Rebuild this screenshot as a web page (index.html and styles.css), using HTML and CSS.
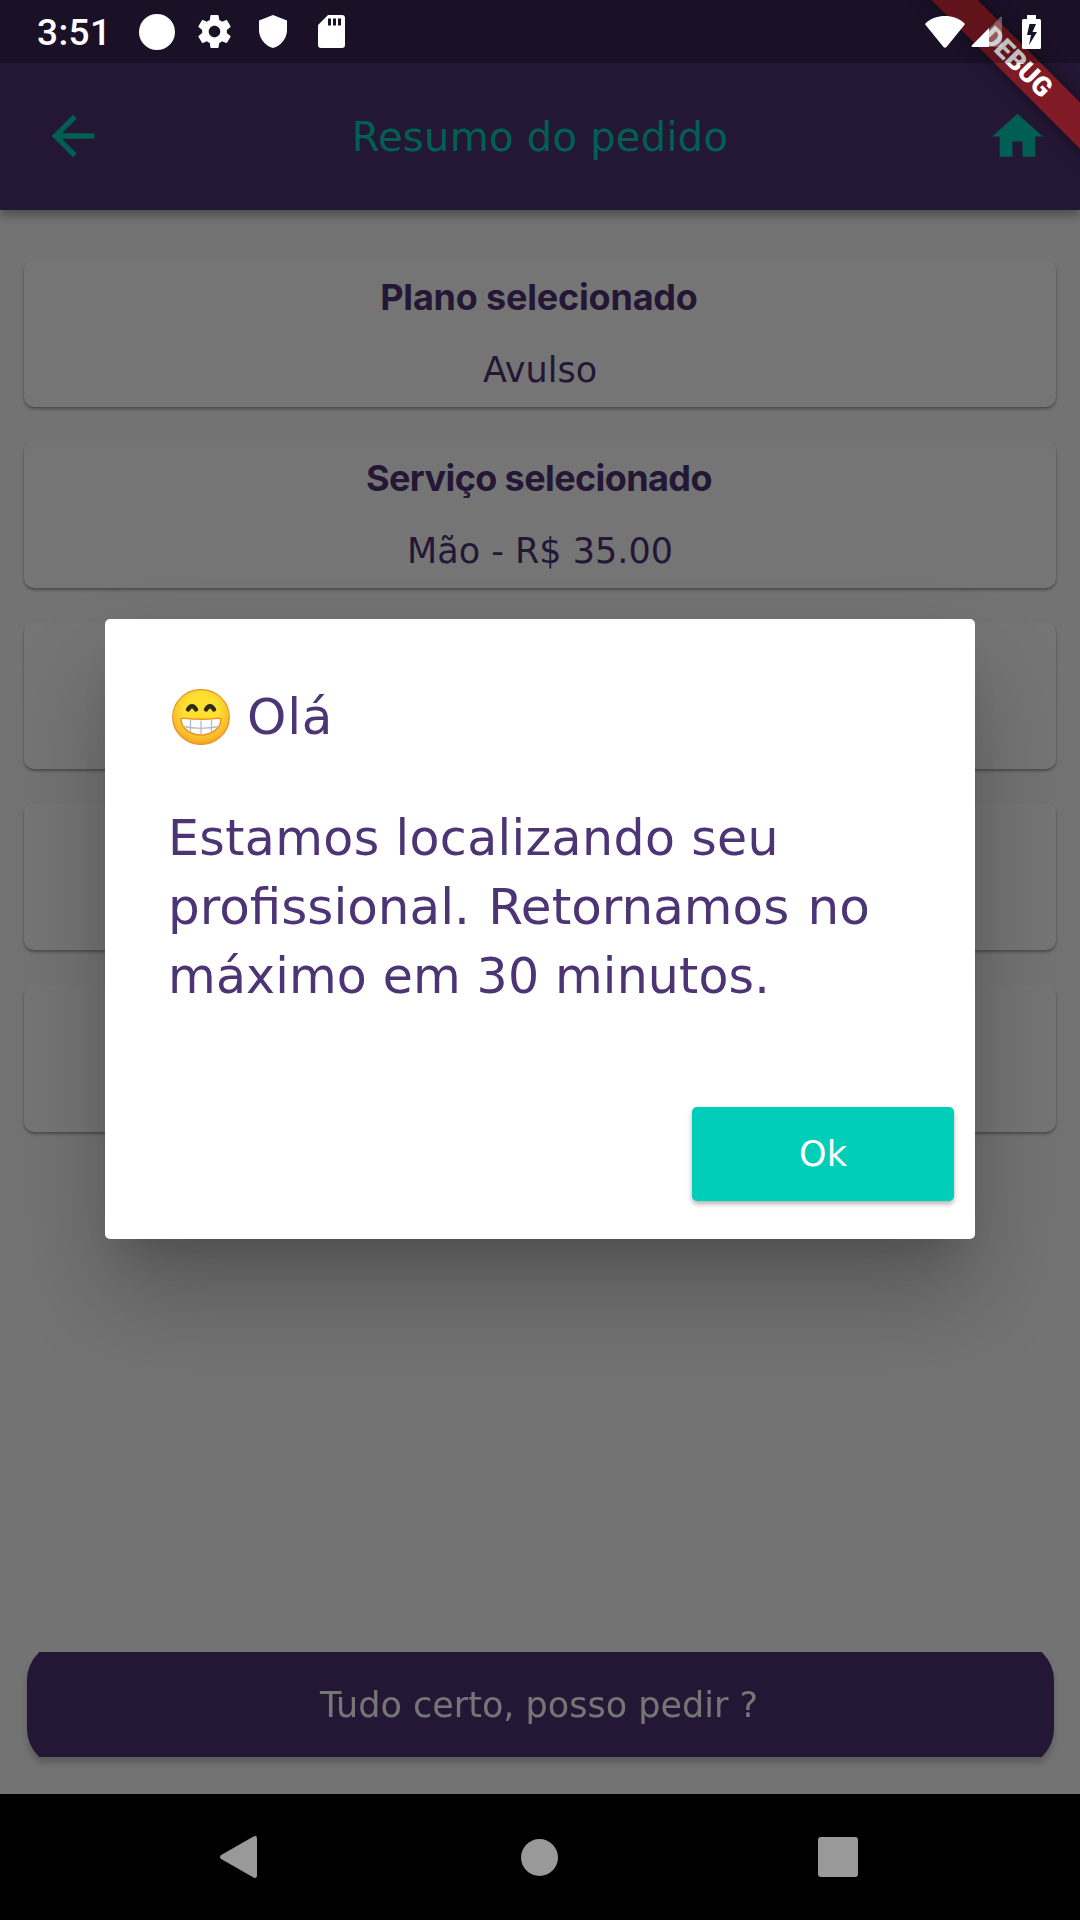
FILE: index.html
```html
<!DOCTYPE html>
<html lang="pt-BR">
<head>
    <meta charset="UTF-8">
    <meta name="viewport" content="width=device-width, initial-scale=1.0">
    <title>Resumo do pedido</title>
    <link rel="stylesheet" href="styles.css">
</head>
<body>
    <div class="screen">
        <header class="app-bar">
            <svg class="back-icon" viewBox="0 0 24 24"><path d="M20 11H7.83l5.59-5.59L12 4l-8 8 8 8 1.41-1.41L7.83 13H20v-2z"/></svg>
            <h1>Resumo do pedido</h1>
            <svg class="home-icon" viewBox="0 0 24 24"><path d="M10 20v-6h4v6h5v-8h3L12 3 2 12h3v8z"/></svg>
        </header>
        <main class="content">
            <div class="card">
                <h2>Plano selecionado</h2>
                <p>Avulso</p>
            </div>
            <div class="card">
                <h2 class="service-title">Serviço selecionado</h2>
                <p>Mão - R$ 35.00</p>
            </div>
            <div class="card"></div>
            <div class="card"></div>
            <div class="card"></div>
            <div class="confirm">
                <div class="confirm-clip">
                    <button class="confirm-button">Tudo certo, posso pedir ?</button>
                </div>
            </div>
        </main>
    </div>

    <div class="modal">
        <div class="dialog">
            <div class="dialog-title">
                <svg class="emoji" viewBox="0 0 58 56">
                    <defs>
                        <radialGradient id="face" cx="50%" cy="38%" r="62%">
                            <stop offset="50%" stop-color="#fde030"/>
                            <stop offset="88%" stop-color="#f9b72b"/>
                            <stop offset="100%" stop-color="#f59a20"/>
                        </radialGradient>
                    </defs>
                    <ellipse cx="29" cy="28" rx="28.3" ry="27.4" fill="url(#face)" stroke="#eb9628" stroke-width="1.3"/>
                    <path d="M16 20.500q4-6.500 8 0M34 20.500q4-6.500 8 0" fill="none" stroke="#2b2a1c" stroke-width="4.400" stroke-linecap="round"/>
                    <path d="M9 31q0-2 3-1.8 17 2.2 34 0 3-.2 3 1.8c-.7 8.500-9 15-20 15s-19.300-6.500-20-15z" fill="#fff" stroke="#ef9420" stroke-width="1.600"/>
                    <path d="M11 37.500q18 3.600 36 0M18.500 31v12.500M29 31.500v14M39.500 31v12.500" fill="none" stroke="#b4bbc0" stroke-width="1.300"/>
                </svg>
                <span>Olá</span>
            </div>
            <p class="message">
                <span class="line-1">Estamos localizando seu</span><br>
                <span class="line-2">profissional. Retornamos no</span><br>
                <span class="line-3">máximo em 30 minutos.</span>
            </p>
            <button class="ok-button">Ok</button>
        </div>
    </div>

    <div class="debug"><span>DEBUG</span></div>

    <div class="status-bar">
        <span class="time">3:51</span>
        <div class="status-icons">
            <svg width="36" height="36" viewBox="0 0 36 36"><circle cx="18" cy="18" r="18"/></svg>
            <svg class="gear" width="33" height="33" viewBox="2 2 20 20"><path d="M19.430 12.980c.04-.32.07-.64.07-.98s-.03-.66-.07-.98l2.110-1.650c.19-.15.24-.42.12-.64l-2-3.460c-.12-.22-.39-.3-.61-.22l-2.490 1c-.52-.4-1.080-.73-1.690-.98l-.38-2.650C14.460 2.180 14.250 2 14 2h-4c-.25 0-.46.18-.49.42l-.38 2.650c-.61.25-1.170.59-1.690.98l-2.490-1c-.23-.09-.49 0-.61.22l-2 3.460c-.13.22-.07.49.12.64l2.110 1.650c-.04.32-.07.65-.07.98s.03.66.07.98l-2.110 1.650c-.19.15-.24.42-.12.64l2 3.460c.12.22.39.3.61.22l2.490-1c.52.4 1.080.73 1.690.98l.38 2.650c.03.24.24.42.49.42h4c.25 0 .46-.18.49-.42l.38-2.650c.61-.25 1.170-.59 1.690-.98l2.490 1c.23.09.49 0 .61-.22l2-3.460c.12-.22.07-.49-.12-.64l-2.110-1.650zM12 15.500c-1.930 0-3.500-1.570-3.500-3.500s1.570-3.500 3.500-3.500 3.500 1.570 3.500 3.500-1.570 3.500-3.500 3.500z"/></svg>
            <svg class="shield" width="28" height="33" viewBox="0 0 28 33"><path d="M14 0l14 5.500V15c0 8.500-6 15.800-14 18C6 30.800 0 23.500 0 15V5.500z"/></svg>
            <svg class="sd-card" width="27" height="33" viewBox="0 0 27 33"><path fill-rule="evenodd" d="M10 0h14a3 3 0 0 1 3 3v27a3 3 0 0 1-3 3H3a3 3 0 0 1-3-3V10zM10 3.500v7h3v-7zM15 3.500v7h3v-7zM20 3.500v7h3v-7z"/></svg>
        </div>
        <div class="system-icons">
            <svg width="40" height="32" viewBox="0 0 40 32"><path d="M.6 7.200C11-2.400 29-2.400 39.400 7.200q.8.900 0 1.800L21.500 31q-1.500 1.500-3 0L.6 9q-.8-.9 0-1.800z"/></svg>
            <svg class="signal" width="31" height="31" viewBox="0 0 31 31"><path d="M31 1.500V31H18V13L29.500.8Q31 0 31 1.500z" opacity=".3"/><path d="M18 12v19H1.500Q0 31 .8 29.500z"/></svg>
            <svg width="19" height="34" viewBox="0 0 19 34"><path fill-rule="evenodd" d="M5 0h9v4h3.500Q19 4 19 5.500v27q0 1.500-1.500 1.500h-16Q0 34 0 32.500v-27Q0 4 1.500 4H5zM7.500 9L5 20h4L7 30l8-13h-4.500L14 9z"/></svg>
        </div>
    </div>

    <nav class="nav-bar">
        <svg width="37" height="42" viewBox="0 0 37 42"><path d="M33.500.6Q37-1 37 2.500v37q0 3.500-3.500 1.900L1.200 23q-2.400-2 0-4z"/></svg>
        <svg class="nav-home" width="37" height="37" viewBox="0 0 37 37"><circle cx="18.500" cy="18.500" r="18.500"/></svg>
        <svg width="40" height="40" viewBox="0 0 40 40"><rect width="40" height="40" rx="3"/></svg>
    </nav>
</body>
</html>
```
FILE: styles.css
```css
* {
    box-sizing: border-box;
    margin: 0;
    padding: 0;
}
body {
    position: relative;
    width: 1080px;
    height: 1920px;
    overflow: hidden;
    display: flex;
    flex-direction: column;
    font-family: "DejaVu Sans", sans-serif;
    font-size: 35px;
    color: #4c3475;
    background-color: #fafafa;
}
button {
    border: none;
    font: inherit;
    color: #fff;
}
svg {
    display: block;
    flex: none;
}

.screen {
    height: 1794px;
    display: flex;
    flex-direction: column;
}
.app-bar {
    height: 210px;
    padding: 62px 32px 0 41px;
    display: flex;
    align-items: center;
    background-color: #4c3475;
    color: #00ceb8;
    fill: #00ceb8;
    box-shadow: 0 5px 10px rgba(0, 0, 0, .35);
}
.back-icon {
    width: 64px;
    height: 64px;
}
.app-bar h1 {
    flex: 1;
    padding: 2px 12px 0 0;
    font-size: 40px;
    font-weight: 400;
    letter-spacing: .3px;
    text-align: center;
}
.home-icon {
    width: 61px;
    height: 61px;
}

.content {
    flex: 1;
    padding: 49.5px 24px 37px;
    display: flex;
    flex-direction: column;
    gap: 34.3px;
}
.card {
    height: 147px;
    padding-top: 1px;
    display: grid;
    grid-template-rows: 1fr 1fr;
    align-items: center;
    justify-items: center;
    border-radius: 10px;
    background-color: #fff;
    box-shadow: 0 2px 3px rgba(0, 0, 0, .35);
}
.card h2 {
    padding-right: 2px;
    font-family: Inter, sans-serif;
    font-size: 36px;
    font-weight: 700;
    letter-spacing: -.2px;
}
.card .service-title {
    letter-spacing: -.6px;
}

.confirm {
    margin-top: auto;
    padding: 0 2.5px;
    filter: drop-shadow(0 6px 3px rgba(0, 0, 0, .2));
}
.confirm-clip {
    height: 105px;
    display: flex;
    align-items: center;
    overflow: hidden;
}
.confirm-button {
    flex: none;
    width: 100%;
    height: 125px;
    padding-right: 2px;
    border-radius: 38px;
    background-color: #4c3475;
}

/* dark overlay + dialog */
.modal {
    position: absolute;
    top: 0;
    left: 0;
    width: 1080px;
    height: 1794px;
    padding-top: 63px;
    display: flex;
    align-items: center;
    justify-content: center;
    background-color: rgba(0, 0, 0, .54);
}
.dialog {
    width: 870px;
    height: 620px;
    padding: 63px 21px 37.5px 63px;
    display: flex;
    flex-direction: column;
    border-radius: 5px;
    background-color: #fff;
    box-shadow: 0 24px 36px -18px rgba(0, 0, 0, .15), 0 55px 95px 0 rgba(0, 0, 0, .24);
}
.dialog-title {
    height: 69px;
    padding-top: 1px;
    display: flex;
    align-items: center;
    gap: 17px;
    font-size: 50px;
    letter-spacing: .8px;
}
.emoji {
    width: 58px;
    height: 56px;
    margin-left: 4px;
}
.message {
    margin-top: 54px;
    font-size: 49px;
    line-height: 68.5px;
    white-space: nowrap;
}
.line-1 {
    letter-spacing: .37px;
}
/* no letter-spacing here, it would break the "fi" ligature */
.line-2 {
    font-size: 50px;
    word-spacing: 2.5px;
}
.line-3 {
    letter-spacing: .15px;
}
.ok-button {
    width: 262px;
    height: 94px;
    margin-top: auto;
    align-self: flex-end;
    border-radius: 5px;
    background-color: #00ceb8;
    box-shadow: 0 3px 5px rgba(0, 0, 0, .3);
}

.debug {
    position: absolute;
    top: 0;
    right: 0;
    width: 200px;
    height: 200px;
    overflow: hidden;
}
.debug span {
    position: absolute;
    top: 46px;
    left: -13px;
    width: 300px;
    height: 33px;
    transform: rotate(45deg);
    background-color: rgba(183, 28, 28, .63);
    box-shadow: 0 0 16px rgba(0, 0, 0, .5);
    color: #fff;
    font: 900 27px/33px Roboto, sans-serif;
    text-align: center;
}

.status-bar {
    position: absolute;
    top: 0;
    left: 0;
    width: 1080px;
    height: 63px;
    padding: 0 39px 0 37px;
    display: flex;
    align-items: center;
    background-color: rgba(0, 0, 0, .25);
    fill: #fff;
}
.time {
    width: 102px;
    padding-top: 1px;
    color: #fff;
    font: 500 37px Roboto, sans-serif;
    letter-spacing: .4px;
}
.status-icons {
    display: flex;
    align-items: center;
}
.gear {
    margin-left: 23px;
}
.shield {
    margin-left: 28px;
}
.sd-card {
    margin-left: 31px;
}
.system-icons {
    margin-left: auto;
    display: flex;
    align-items: center;
}
.signal {
    margin: 0 20px 0 6px;
}

.nav-bar {
    height: 126px;
    padding: 0 222px 0 220px;
    display: flex;
    align-items: center;
    justify-content: space-between;
    background-color: #000;
    fill: #999;
}
.nav-home {
    margin-left: 3px;
}
```
